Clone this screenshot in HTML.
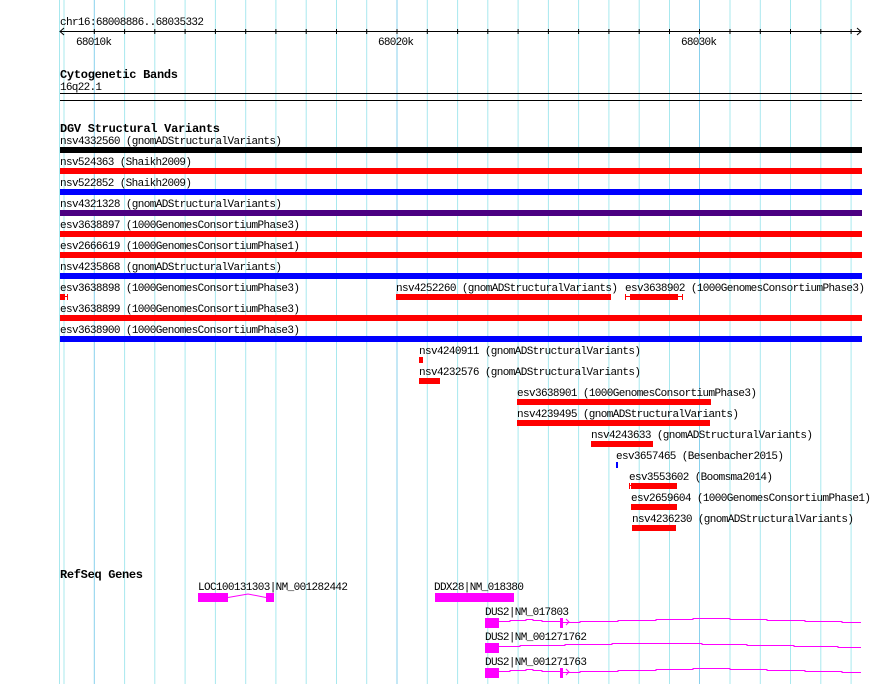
<!DOCTYPE html>
<html><head><meta charset="utf-8"><style>
html,body{margin:0;padding:0;background:#fff;width:890px;height:684px;overflow:hidden}
svg text{font-family:"Liberation Mono","DejaVu Sans Mono",monospace;font-size:11px;fill:#000}
svg text.b{font-weight:bold;font-size:12px}
</style></head><body>
<svg width="890" height="684" xmlns="http://www.w3.org/2000/svg">
<g stroke="#a8e8ee" stroke-width="1">
<line x1="59.5" y1="0" x2="59.5" y2="684"/>
<line x1="64" y1="0" x2="64" y2="684"/>
<line x1="124.6" y1="0" x2="124.6" y2="684"/>
<line x1="154.8" y1="0" x2="154.8" y2="684"/>
<line x1="185.1" y1="0" x2="185.1" y2="684"/>
<line x1="215.4" y1="0" x2="215.4" y2="684"/>
<line x1="245.7" y1="0" x2="245.7" y2="684"/>
<line x1="275.9" y1="0" x2="275.9" y2="684"/>
<line x1="306.2" y1="0" x2="306.2" y2="684"/>
<line x1="336.5" y1="0" x2="336.5" y2="684"/>
<line x1="366.7" y1="0" x2="366.7" y2="684"/>
<line x1="427.3" y1="0" x2="427.3" y2="684"/>
<line x1="457.6" y1="0" x2="457.6" y2="684"/>
<line x1="487.8" y1="0" x2="487.8" y2="684"/>
<line x1="518.1" y1="0" x2="518.1" y2="684"/>
<line x1="548.4" y1="0" x2="548.4" y2="684"/>
<line x1="578.6" y1="0" x2="578.6" y2="684"/>
<line x1="608.9" y1="0" x2="608.9" y2="684"/>
<line x1="639.2" y1="0" x2="639.2" y2="684"/>
<line x1="669.5" y1="0" x2="669.5" y2="684"/>
<line x1="730" y1="0" x2="730" y2="684"/>
<line x1="760.3" y1="0" x2="760.3" y2="684"/>
<line x1="790.5" y1="0" x2="790.5" y2="684"/>
<line x1="820.8" y1="0" x2="820.8" y2="684"/>
<line x1="851.1" y1="0" x2="851.1" y2="684"/>
</g>
<g stroke="#88d0ec" stroke-width="1">
<line x1="94.3" y1="0" x2="94.3" y2="684"/>
<line x1="397" y1="0" x2="397" y2="684"/>
<line x1="699.5" y1="0" x2="699.5" y2="684"/>
</g>
<text x="60" y="25" textLength="144">chr16:68008886..68035332</text>
<g stroke="#000" stroke-width="1">
<line x1="60" y1="31.5" x2="861" y2="31.5"/>
<polyline points="64,28 60,31.5 64,35" fill="none"/>
<polyline points="857,28 861,31.5 857,35" fill="none"/>
</g>
<g stroke="#000" stroke-width="1">
<line x1="94.3" y1="29" x2="94.3" y2="34"/><line x1="124.6" y1="29" x2="124.6" y2="34"/><line x1="154.8" y1="29" x2="154.8" y2="34"/><line x1="185.1" y1="29" x2="185.1" y2="34"/><line x1="215.4" y1="29" x2="215.4" y2="34"/><line x1="245.7" y1="29" x2="245.7" y2="34"/><line x1="275.9" y1="29" x2="275.9" y2="34"/><line x1="306.2" y1="29" x2="306.2" y2="34"/><line x1="336.5" y1="29" x2="336.5" y2="34"/><line x1="366.7" y1="29" x2="366.7" y2="34"/><line x1="397" y1="29" x2="397" y2="34"/><line x1="427.3" y1="29" x2="427.3" y2="34"/><line x1="457.6" y1="29" x2="457.6" y2="34"/><line x1="487.8" y1="29" x2="487.8" y2="34"/><line x1="518.1" y1="29" x2="518.1" y2="34"/><line x1="548.4" y1="29" x2="548.4" y2="34"/><line x1="578.6" y1="29" x2="578.6" y2="34"/><line x1="608.9" y1="29" x2="608.9" y2="34"/><line x1="639.2" y1="29" x2="639.2" y2="34"/><line x1="669.5" y1="29" x2="669.5" y2="34"/><line x1="699.5" y1="29" x2="699.5" y2="34"/><line x1="730" y1="29" x2="730" y2="34"/><line x1="760.3" y1="29" x2="760.3" y2="34"/><line x1="790.5" y1="29" x2="790.5" y2="34"/><line x1="820.8" y1="29" x2="820.8" y2="34"/><line x1="851.1" y1="29" x2="851.1" y2="34"/>
</g>
<text x="76" y="45" textLength="36">68010k</text>
<text x="378" y="45" textLength="36">68020k</text>
<text x="681" y="45" textLength="36">68030k</text>

<text class="b" x="60" y="78" textLength="118">Cytogenetic Bands</text>
<text x="60" y="90" textLength="42">16q22.1</text>
<rect x="60" y="93" width="802" height="1" fill="#000"/>
<rect x="60" y="100" width="802" height="1" fill="#000"/>

<text class="b" x="60" y="132" textLength="160">DGV Structural Variants</text>
<text x="60" y="144" textLength="222">nsv4332560 (gnomADStructuralVariants)</text>
<rect x="60" y="147" width="802" height="6" fill="#000"/>
<text x="60" y="165" textLength="132">nsv524363 (Shaikh2009)</text>
<rect x="60" y="168" width="802" height="6" fill="#f00"/>
<text x="60" y="186" textLength="132">nsv522852 (Shaikh2009)</text>
<rect x="60" y="189" width="802" height="6" fill="#00f"/>
<text x="60" y="207" textLength="222">nsv4321328 (gnomADStructuralVariants)</text>
<rect x="60" y="210" width="802" height="6" fill="#4b0082"/>
<text x="60" y="228" textLength="240">esv3638897 (1000GenomesConsortiumPhase3)</text>
<rect x="60" y="231" width="802" height="6" fill="#f00"/>
<text x="60" y="249" textLength="240">esv2666619 (1000GenomesConsortiumPhase1)</text>
<rect x="60" y="252" width="802" height="6" fill="#f00"/>
<text x="60" y="270" textLength="222">nsv4235868 (gnomADStructuralVariants)</text>
<rect x="60" y="273" width="802" height="6" fill="#00f"/>
<text x="60" y="291" textLength="240">esv3638898 (1000GenomesConsortiumPhase3)</text>
<rect x="60" y="294" width="5" height="6" fill="#f00"/>
<rect x="64" y="296" width="4" height="1" fill="#f00"/><rect x="67" y="294" width="1" height="6" fill="#f00"/>
<text x="396" y="291" textLength="222">nsv4252260 (gnomADStructuralVariants)</text>
<rect x="396" y="294" width="215" height="6" fill="#f00"/>
<text x="625" y="291" textLength="240">esv3638902 (1000GenomesConsortiumPhase3)</text>
<rect x="625" y="294" width="1" height="6" fill="#f00"/><rect x="625" y="296" width="58" height="1" fill="#f00"/><rect x="682" y="294" width="1" height="6" fill="#f00"/>
<rect x="630" y="294" width="48" height="6" fill="#f00"/>
<text x="60" y="312" textLength="240">esv3638899 (1000GenomesConsortiumPhase3)</text>
<rect x="60" y="315" width="802" height="6" fill="#f00"/>
<text x="60" y="333" textLength="240">esv3638900 (1000GenomesConsortiumPhase3)</text>
<rect x="60" y="336" width="802" height="6" fill="#00f"/>

<text x="419" y="354" textLength="222">nsv4240911 (gnomADStructuralVariants)</text>
<rect x="419" y="357" width="4" height="6" fill="#f00"/>
<text x="419" y="375" textLength="222">nsv4232576 (gnomADStructuralVariants)</text>
<rect x="419" y="378" width="21" height="6" fill="#f00"/>
<text x="517" y="396" textLength="240">esv3638901 (1000GenomesConsortiumPhase3)</text>
<rect x="517" y="399" width="194" height="6" fill="#f00"/>
<text x="517" y="417" textLength="222">nsv4239495 (gnomADStructuralVariants)</text>
<rect x="517" y="420" width="193" height="6" fill="#f00"/>
<text x="591" y="438" textLength="222">nsv4243633 (gnomADStructuralVariants)</text>
<rect x="591" y="441" width="62" height="6" fill="#f00"/>
<text x="616" y="459" textLength="168">esv3657465 (Besenbacher2015)</text>
<rect x="616" y="462" width="2" height="6" fill="#00f"/>
<text x="629" y="480" textLength="144">esv3553602 (Boomsma2014)</text>
<rect x="629" y="483" width="1" height="6" fill="#f00"/><rect x="629" y="485" width="3" height="1" fill="#f00"/>
<rect x="631" y="483" width="46" height="6" fill="#f00"/>
<text x="631" y="501" textLength="240">esv2659604 (1000GenomesConsortiumPhase1)</text>
<rect x="631" y="504" width="46" height="6" fill="#f00"/>
<text x="632" y="522" textLength="222">nsv4236230 (gnomADStructuralVariants)</text>
<rect x="632" y="525" width="44" height="6" fill="#f00"/>

<text class="b" x="60" y="578" textLength="83">RefSeq Genes</text>
<text x="198" y="590" textLength="150">LOC100131303|NM_001282442</text>
<rect x="198" y="593" width="30" height="9" fill="#f0f"/>
<polyline points="228,597.5 248,594 266,597.5" fill="none" stroke="#f0f"/>
<rect x="266" y="593" width="8" height="9" fill="#f0f"/>
<text x="434" y="590" textLength="90">DDX28|NM_018380</text>
<rect x="435" y="593" width="79" height="9" fill="#f0f"/>

<g fill="none" stroke="#f0f" stroke-width="1">
<polyline points="499,621.5 510,621.5 510,620.5 526,620.5 526,619.5 533,619.5 533,620.5 542,620.5 542,621.5 561,621.5"/>
<polyline points="561,622.5 580,622.5 580,621.5 618,621.5 618,620.5 656,620.5 656,619.5 693,619.5 693,618.5 730,618.5 730,619.5 767,619.5 767,620.5 805,620.5 805,621.5 842,621.5 842,622.5 861,622.5"/>
<polyline points="566,619 569,622 566,625"/>
<polyline points="499,646.5 520,646.5 520,645.5 565,645.5 565,644.5 612,644.5 612,643.5 702,643.5 702,644.5 747,644.5 747,645.5 794,645.5 794,646.5 838,646.5 838,647.5 861,647.5"/>
<polyline points="499,671.5 510,671.5 510,670.5 526,670.5 526,669.5 533,669.5 533,670.5 542,670.5 542,671.5 561,671.5"/>
<polyline points="561,672.5 580,672.5 580,671.5 618,671.5 618,670.5 656,670.5 656,669.5 693,669.5 693,668.5 730,668.5 730,669.5 767,669.5 767,670.5 805,670.5 805,671.5 842,671.5 842,672.5 861,672.5"/>
<polyline points="566,669 569,672 566,675"/>
</g>
<text x="485" y="615" textLength="84">DUS2|NM_017803</text>
<rect x="485" y="618" width="14" height="10" fill="#f0f"/>
<rect x="560" y="618" width="3" height="10" fill="#f0f"/>
<text x="485" y="640" textLength="102">DUS2|NM_001271762</text>
<rect x="485" y="643" width="14" height="10" fill="#f0f"/>
<text x="485" y="665" textLength="102">DUS2|NM_001271763</text>
<rect x="485" y="668" width="14" height="10" fill="#f0f"/>
<rect x="560" y="668" width="3" height="10" fill="#f0f"/>
</svg>
</body></html>
